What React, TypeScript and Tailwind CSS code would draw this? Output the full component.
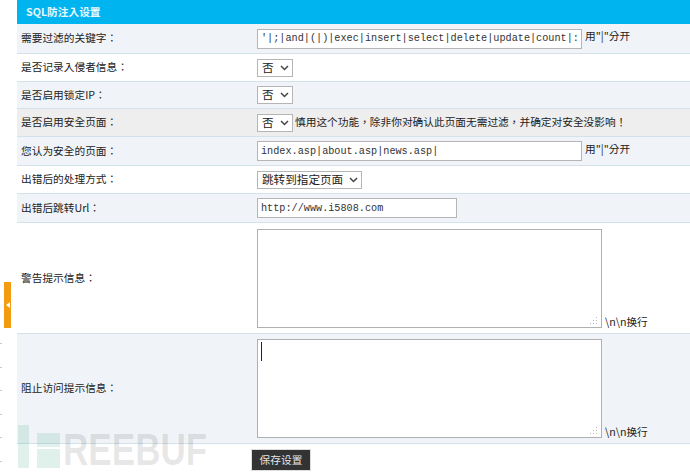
const CJK = "font-['Noto_Sans_CJK_TC',sans-serif]";
const MONO = "font-['Liberation_Mono','Noto_Sans_CJK_SC',monospace]";

function Row({ label, h, bg, children }: { label: string; h: string; bg: string; children: React.ReactNode }) {
  return (
    <div className={`flex items-center border-b border-[#d3e1ea] ${h} ${bg}`}>
      <div className="w-[240px] shrink-0 pl-1 text-[10.7px] leading-none text-[#222]">{label}</div>
      <div className="flex h-full flex-1 items-center">{children}</div>
    </div>
  );
}

function Select({ value, w }: { value: string; w: string }) {
  return (
    <div className={`flex h-[18px] items-center justify-between whitespace-nowrap border border-[#b5b5b5] bg-white pl-[4px] pr-[3px] text-[11.6px] leading-none text-[#222] ${w}`}>
      <span>{value}</span>
      <svg width="9" height="6" viewBox="0 0 9 6" fill="none" stroke="#444" strokeWidth="1.5">
        <path d="M1 1l3.5 3.5L8 1" />
      </svg>
    </div>
  );
}

function TextBox({ value, w }: { value: string; w: string }) {
  return (
    <input
      readOnly
      value={value}
      className={`h-[20px] border border-[#b5b5b5] bg-white pl-[3px] text-[10.2px] text-[#333] outline-none ${MONO} ${w}`}
    />
  );
}

function Area({ caret }: { caret?: boolean }) {
  return (
    <div className="relative h-[99px] w-[345px] border border-[#b0b0b0] bg-white">
      {caret && <div className="absolute left-[3px] top-[2px] h-[19px] w-px bg-[#222]" />}
      <svg className="absolute bottom-[2px] right-[3px]" width="8" height="8" viewBox="0 0 8 8" fill="#bbb">
        <rect x="6" y="0" width="1" height="1" />
        <rect x="3" y="3" width="1" height="1" />
        <rect x="6" y="3" width="1" height="1" />
        <rect x="0" y="6" width="1" height="1" />
        <rect x="3" y="6" width="1" height="1" />
        <rect x="6" y="6" width="1" height="1" />
      </svg>
    </div>
  );
}

export default function App() {
  return (
    <div className={`relative h-[475px] w-[690px] overflow-hidden bg-white pl-[17px] ${CJK}`}>
      {/* Collapse tab on the sidebar edge */}
      <div className="absolute left-[4px] top-[282px] flex h-[46px] w-[7px] items-center justify-center bg-[#f39c12]">
        <div className="h-0 w-0 border-y-[3px] border-r-[4px] border-y-transparent border-r-white" />
      </div>
      {/* Sidebar edge ticks */}
      <div className="absolute left-0 top-[343px] flex flex-col gap-[22.5px]">
        {[0, 1, 2, 3, 4, 5].map((i) => (
          <div key={i} className="h-px w-[2px] bg-[#ccc]" />
        ))}
      </div>

      <div className="flex h-[24px] items-center bg-[#00b4ef] pl-[9px] text-[10.7px] font-bold text-[#e8f8ff]">SQL防注入设置</div>

      <Row label="需要过滤的关键字：" h="h-[30px]" bg="bg-[#f0f4f8]">
        <TextBox value="'|;|and|(|)|exec|insert|select|delete|update|count|:" w="w-[325px]" />
        <span className="mb-[4px] ml-[3px] text-[10.7px] text-[#222]">用"|"分开</span>
      </Row>
      <Row label="是否记录入侵者信息：" h="h-[28px]" bg="bg-white">
        <Select value="否" w="w-[36px]" />
      </Row>
      <Row label="是否启用锁定IP：" h="h-[27px]" bg="bg-[#f0f4f8]">
        <Select value="否" w="w-[36px]" />
      </Row>
      <Row label="是否启用安全页面：" h="h-[28px]" bg="bg-[#eeeeee]">
        <Select value="否" w="w-[36px]" />
        <span className="ml-[2px] text-[10.7px] text-[#222]">慎用这个功能，除非你对确认此页面无需过滤，并确定对安全没影响！</span>
      </Row>
      <Row label="您认为安全的页面：" h="h-[29px]" bg="bg-[#f0f4f8]">
        <TextBox value="index.asp|about.asp|news.asp|" w="w-[325px]" />
        <span className="mb-[4px] ml-[3px] text-[10.7px] text-[#222]">用"|"分开</span>
      </Row>
      <Row label="出错后的处理方式：" h="h-[28px]" bg="bg-white">
        <Select value="跳转到指定页面" w="w-[105px]" />
      </Row>
      <Row label="出错后跳转Url：" h="h-[29px]" bg="bg-[#f0f4f8]">
        <TextBox value="http://www.i5808.com" w="w-[200px]" />
      </Row>
      <Row label="警告提示信息：" h="h-[111px]" bg="bg-white">
        <Area />
        <span className="ml-[3px] mt-[88px] text-[10.7px] text-[#222]">\n\n换行</span>
      </Row>
      <Row label="阻止访问提示信息：" h="h-[110px]" bg="bg-[#f0f4f8]">
        <Area caret />
        <span className="ml-[3px] mt-[88px] text-[10.7px] text-[#222]">\n\n换行</span>
      </Row>

      <div className="ml-[234px] mt-[5px] flex h-[22px] w-[60px] items-center justify-center border border-[#ddd] bg-[#333] text-[10.7px] text-[#e6e6e6]">保存设置</div>

      {/* Watermark */}
      <div className="pointer-events-none absolute left-[18px] top-[425px] h-[43px] w-[200px]">
        <div className="absolute left-0 top-0 h-[43px] w-[11px] bg-[#2f9e78]/15" />
        <div className="absolute left-[19px] top-[8px] h-[14px] w-[23px] bg-[#2f9e78]/15" />
        <div className="absolute left-[19px] top-[24px] h-[19px] w-[23px] bg-[#2f9e78]/15" />
        <span className="absolute left-[45px] top-[5px] origin-left scale-x-[0.78] whitespace-nowrap font-['Liberation_Sans',sans-serif] text-[45px] font-bold leading-[40px] text-black/10">REEBUF</span>
      </div>
    </div>
  );
}
